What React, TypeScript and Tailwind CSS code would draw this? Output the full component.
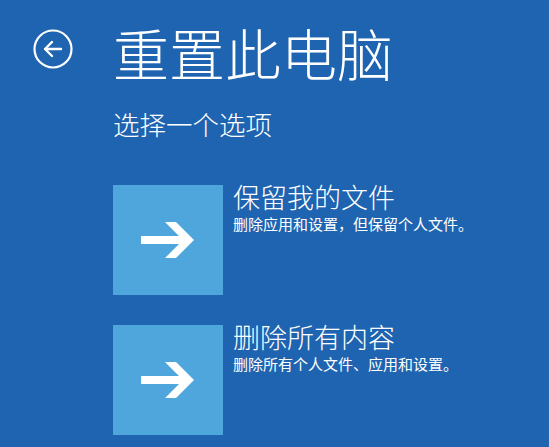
import React from 'react';

const cjk = { fontFamily: '"Noto Sans CJK SC", "Noto Sans", sans-serif' };

function ArrowTile() {
  return (
    <div className="w-[110px] h-[110px] bg-[#4ea6dd] flex items-center justify-center shrink-0">
      <svg width="54" height="40" viewBox="0 0 54 40">
        <path d="M0 16 H38 L24 2 H35 L53 20 L35 38 H24 L38 24 H0 Z" fill="#ffffff" />
      </svg>
    </div>
  );
}

function Option({ title, desc }: { title: string; desc: string }) {
  return (
    <div className="flex items-start">
      <ArrowTile />
      <div className="pl-[10px] -mt-[3px]">
        <div className="text-[27px] leading-[30px] font-light text-white">{title}</div>
        <div className="text-[15px] leading-[18px] font-normal text-white mt-[3px]">{desc}</div>
      </div>
    </div>
  );
}

export default function App() {
  return (
    <div className="w-[549px] h-[447px] bg-[#1f64b0] overflow-hidden text-white" style={cjk}>
      <div className="flex items-start pt-[20px]">
        <div className="w-[113px] pl-[33px] pt-[9px]">
          <svg width="40" height="40" viewBox="0 0 40 40">
            <circle cx="20" cy="20" r="18.5" fill="none" stroke="#ffffff" strokeWidth="2.2" />
            <path d="M28 20 H12 M19 13 L12 20 L19 27" fill="none" stroke="#ffffff" strokeWidth="2.4" strokeLinecap="round" strokeLinejoin="round" />
          </svg>
        </div>
        <h1 className="text-[56px] leading-[64px] font-light">重置此电脑</h1>
      </div>
      <div className="pl-[113px]">
        <div className="text-[26.5px] leading-[30px] font-light mt-[25px]">选择一个选项</div>
        <div className="flex flex-col gap-[30px] mt-[46px]">
          <Option title="保留我的文件" desc="删除应用和设置，但保留个人文件。" />
          <Option title="删除所有内容" desc="删除所有个人文件、应用和设置。" />
        </div>
      </div>
    </div>
  );
}
